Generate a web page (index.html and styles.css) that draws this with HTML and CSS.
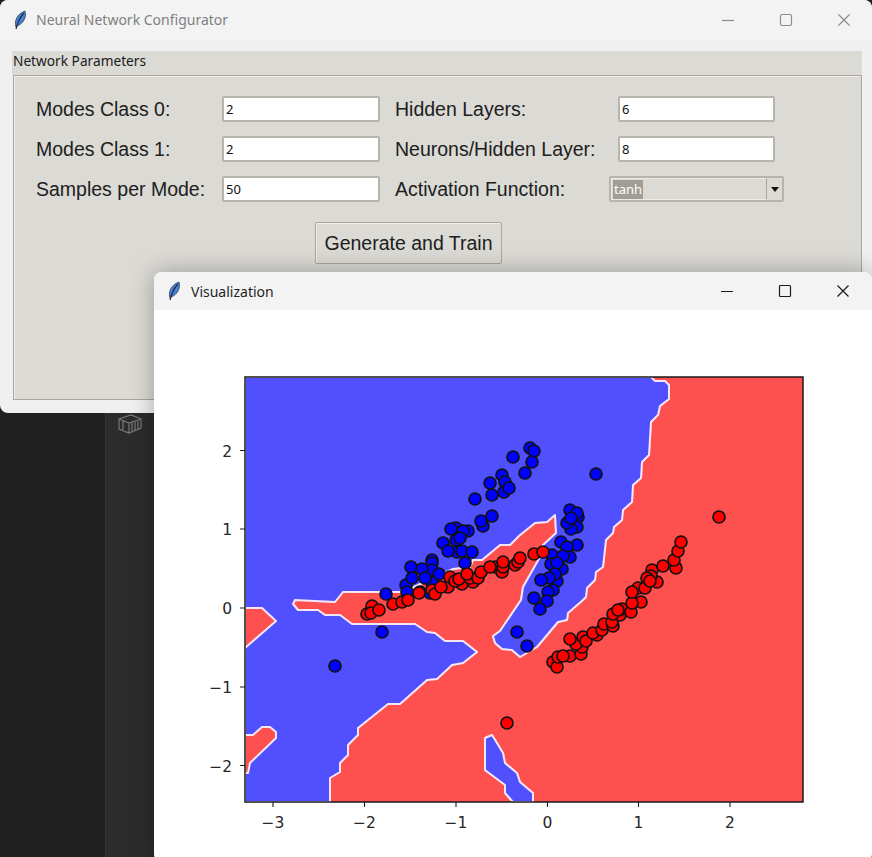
FILE: index.html
```html
<!DOCTYPE html>
<html>

<head>
    <meta charset="UTF-8">
    <title>Neural Network Configurator</title>
    <link rel="stylesheet" href="styles.css">
</head>

<body>
    <div class="desktop">
        <!-- editor behind the two windows -->
        <div class="sidebar">
            <svg class="box-icon" width="26" height="22" viewBox="0 0 26 22">
                <path d="M2 6 L14 2 L24 6 L24 15 L12 20 L2 16 Z M2 6 L12 10 L24 6 M12 10 L12 20 M6 8 L6 18 M15 10 L15 18 M18 9 L18 17 M21 8 L21 16" />
            </svg>
        </div>

        <div class="window config-window">
            <div class="titlebar inactive">
                <svg class="feather" width="14" height="20" viewBox="0 0 14 20">
                    <path d="M3 17 C1 11 4 4 12 1 C14 7 10 14 4 16 Z" fill="#4a82d6" stroke="#1c2c48" stroke-width="0.7" />
                    <path d="M11 3 C8 6 5 11 3 19" stroke="#1c2c48" stroke-width="1.2" fill="none" />
                </svg>
                <span class="title">Neural Network Configurator</span>
                <div class="controls">
                    <svg width="14" height="14" viewBox="0 0 14 14"><path d="M1 7.5 H13" /></svg>
                    <svg width="14" height="14" viewBox="0 0 14 14"><rect x="1.5" y="1.5" width="11" height="11" rx="1.5" /></svg>
                    <svg width="14" height="14" viewBox="0 0 14 14"><path d="M1.5 1.5 L12.5 12.5 M12.5 1.5 L1.5 12.5" /></svg>
                </div>
            </div>
            <div class="window-body">
                <div class="frame-caption">Network Parameters</div>
                <div class="frame">
                    <div class="form-grid">
                        <label>Modes Class 0:</label>
                        <input type="text" value="2">
                        <label>Hidden Layers:</label>
                        <input class="right-entry" type="text" value="6">

                        <label>Modes Class 1:</label>
                        <input type="text" value="2">
                        <label>Neurons/Hidden Layer:</label>
                        <input class="right-entry" type="text" value="8">

                        <label>Samples per Mode:</label>
                        <input type="text" value="50">
                        <label>Activation Function:</label>
                        <div class="combobox">
                            <div class="combo-field"><span class="combo-value">tanh</span></div>
                            <div class="combo-arrow"></div>
                        </div>
                    </div>
                    <button type="button" class="train-button">Generate and Train</button>
                </div>
            </div>
        </div>

        <div class="window plot-window">
            <div class="titlebar">
                <svg class="feather" width="14" height="20" viewBox="0 0 14 20">
                    <path d="M3 17 C1 11 4 4 12 1 C14 7 10 14 4 16 Z" fill="#4a82d6" stroke="#1c2c48" stroke-width="0.7" />
                    <path d="M11 3 C8 6 5 11 3 19" stroke="#1c2c48" stroke-width="1.2" fill="none" />
                </svg>
                <span class="title">Visualization</span>
                <div class="controls">
                    <svg width="14" height="14" viewBox="0 0 14 14"><path d="M1 7.5 H13" /></svg>
                    <svg width="14" height="14" viewBox="0 0 14 14"><rect x="1.5" y="1.5" width="11" height="11" rx="1" /></svg>
                    <svg width="14" height="14" viewBox="0 0 14 14"><path d="M1.5 1.5 L12.5 12.5 M12.5 1.5 L1.5 12.5" /></svg>
                </div>
            </div>

            <!-- viewBox uses screen coordinates so the points are easy to read off -->
            <svg class="plot" width="718" height="547" viewBox="154 310 718 547">
                <defs>
                    <clipPath id="axes-clip"><rect x="245" y="377" width="558" height="425" /></clipPath>
                    <g id="regions">
                        <polygon class="blue-region" points="245,377 651,377 655,381 665,381 669,385 669,399 660,406 658,415 651,422 649,455 642,462 641,478 633,485 632,502 623,510 622,520 614,527 613,533 606,540 603,567 596,572 595,580 587,588 586,597 583,600 568,613 567,620 558,622 537,647 520,657 512,650 502,649 495,643 493,636 500,631 521,600 523,587 540,557 543,545 556,533 555,515 547,522 535,523 520,535 510,545 500,545 482,560 473,560 470,567 453,569 403,592 343,592 335,602 295,600 293,604 298,610 318,610 325,615 340,615 352,624 415,624 427,632 435,633 445,641 463,641 477,652 463,663 452,665 437,679 427,680 400,704 388,704 358,728 358,735 348,745 348,755 340,763 340,772 330,778 330,802 245,802" />
                        <polygon class="blue-region" points="485,738 492,735 497,743 503,753 505,763 517,773 520,782 533,793 533,802 513,802 505,793 505,785 485,770" />
                        <polygon class="red-region" points="245,608 262,608 276,621 245,648" />
                        <polygon class="red-region" points="245,735 253,735 262,727 270,727 276,732 276,738 250,763 248,773 245,773" />
                    </g>
                </defs>

                <rect x="245" y="377" width="558" height="425" fill="#ff5050" />
                <g class="soft" clip-path="url(#axes-clip)">
                    <use href="#regions" class="edge-glow" />
                    <use href="#regions" />
                </g>

                <g class="dots-blue soft">
                    <circle cx="530" cy="448" /><circle cx="534" cy="451" /><circle cx="532" cy="462" /><circle cx="513" cy="457" />
                    <circle cx="525" cy="473" /><circle cx="596" cy="474" /><circle cx="502" cy="475" /><circle cx="505" cy="482" />
                    <circle cx="504" cy="492" /><circle cx="509" cy="488" /><circle cx="490" cy="483" /><circle cx="492" cy="495" />
                    <circle cx="475" cy="499" /><circle cx="483" cy="526" /><circle cx="481" cy="521" /><circle cx="492" cy="516" />
                    <circle cx="468" cy="531" /><circle cx="456" cy="528" /><circle cx="451" cy="529" /><circle cx="463" cy="531" />
                    <circle cx="456" cy="540" /><circle cx="460" cy="538" /><circle cx="443" cy="543" /><circle cx="457" cy="552" />
                    <circle cx="448" cy="551" /><circle cx="462" cy="551" /><circle cx="472" cy="552" /><circle cx="465" cy="563" />
                    <circle cx="432" cy="560" /><circle cx="432" cy="563" /><circle cx="432" cy="570" /><circle cx="411" cy="567" />
                    <circle cx="422" cy="569" /><circle cx="439" cy="574" /><circle cx="432" cy="583" /><circle cx="425" cy="578" />
                    <circle cx="406" cy="585" /><circle cx="412" cy="578" /><circle cx="407" cy="592" /><circle cx="386" cy="594" />
                    <circle cx="420" cy="592" /><circle cx="430" cy="593" />
                    <circle cx="570" cy="510" /><circle cx="578" cy="517" /><circle cx="577" cy="513" /><circle cx="577" cy="527" />
                    <circle cx="571" cy="529" /><circle cx="567" cy="523" /><circle cx="571" cy="518" />
                    <circle cx="577" cy="545" /><circle cx="561" cy="542" /><circle cx="567" cy="547" /><circle cx="570" cy="557" />
                    <circle cx="552" cy="555" /><circle cx="563" cy="556" /><circle cx="551" cy="564" /><circle cx="562" cy="569" />
                    <circle cx="557" cy="563" /><circle cx="557" cy="581" /><circle cx="555" cy="574" /><circle cx="549" cy="578" />
                    <circle cx="541" cy="580" /><circle cx="553" cy="590" /><circle cx="548" cy="592" /><circle cx="547" cy="601" />
                    <circle cx="534" cy="598" /><circle cx="540" cy="609" /><circle cx="527" cy="646" /><circle cx="517" cy="632" />
                    <circle cx="382" cy="632" /><circle cx="335" cy="666" />
                </g>

                <g class="dots-red soft">
                    <circle cx="367" cy="614" /><circle cx="372" cy="606" /><circle cx="371" cy="613" /><circle cx="379" cy="610" />
                    <circle cx="393" cy="604" /><circle cx="402" cy="602" /><circle cx="408" cy="600" /><circle cx="419" cy="593" />
                    <circle cx="432" cy="590" /><circle cx="435" cy="594" /><circle cx="448" cy="587" /><circle cx="441" cy="587" />
                    <circle cx="450" cy="577" /><circle cx="462" cy="584" /><circle cx="455" cy="581" /><circle cx="459" cy="579" />
                    <circle cx="473" cy="582" /><circle cx="470" cy="578" /><circle cx="467" cy="574" /><circle cx="478" cy="578" />
                    <circle cx="481" cy="572" /><circle cx="495" cy="567" /><circle cx="490" cy="567" /><circle cx="502" cy="572" />
                    <circle cx="503" cy="567" /><circle cx="503" cy="562" /><circle cx="515" cy="565" /><circle cx="518" cy="562" />
                    <circle cx="520" cy="558" /><circle cx="534" cy="554" /><circle cx="543" cy="552" /><circle cx="507" cy="723" />
                    <circle cx="553" cy="662" /><circle cx="557" cy="667" /><circle cx="558" cy="657" /><circle cx="570" cy="656" />
                    <circle cx="563" cy="656" /><circle cx="581" cy="654" /><circle cx="582" cy="647" /><circle cx="576" cy="644" />
                    <circle cx="570" cy="639" /><circle cx="583" cy="637" /><circle cx="586" cy="641" /><circle cx="597" cy="635" />
                    <circle cx="593" cy="633" /><circle cx="602" cy="630" /><circle cx="604" cy="624" /><circle cx="613" cy="626" />
                    <circle cx="612" cy="622" /><circle cx="620" cy="615" /><circle cx="613" cy="614" /><circle cx="622" cy="609" />
                    <circle cx="618" cy="610" /><circle cx="631" cy="612" /><circle cx="641" cy="602" /><circle cx="632" cy="603" />
                    <circle cx="638" cy="588" /><circle cx="632" cy="592" /><circle cx="645" cy="588" /><circle cx="657" cy="582" />
                    <circle cx="652" cy="570" /><circle cx="651" cy="576" /><circle cx="647" cy="578" /><circle cx="650" cy="581" />
                    <circle cx="663" cy="566" /><circle cx="676" cy="568" /><circle cx="674" cy="560" /><circle cx="678" cy="551" />
                    <circle cx="681" cy="542" /><circle cx="719" cy="517" />
                </g>

                <rect class="axes-box" x="245" y="377" width="558" height="425" />

                <path class="ticks" d="M273 802 V807 M364.5 802 V807 M456 802 V807 M547.5 802 V807 M638.5 802 V807 M730 802 V807 M245 450.5 H240 M245 529 H240 M245 608 H240 M245 687 H240 M245 765.5 H240" />

                <g class="tick-x">
                    <text x="273" y="828">−3</text>
                    <text x="364.5" y="828">−2</text>
                    <text x="456" y="828">−1</text>
                    <text x="547.5" y="828">0</text>
                    <text x="638.5" y="828">1</text>
                    <text x="730" y="828">2</text>
                </g>
                <g class="tick-y">
                    <text x="232" y="456.5">2</text>
                    <text x="232" y="535">1</text>
                    <text x="232" y="614">0</text>
                    <text x="232" y="693">−1</text>
                    <text x="232" y="771.5">−2</text>
                </g>
            </svg>
        </div>
    </div>
</body>

</html>
```

FILE: styles.css
```css
html, body {
    margin: 0;
    padding: 0;
    background-color: #202020;
}

.desktop {
    position: relative;
    width: 872px;
    height: 857px;
    overflow: hidden;
}

.sidebar {
    position: absolute;
    left: 105px;
    top: 400px;
    width: 100px;
    height: 457px;
    background-color: #2c2c2c;
    border-left: 1px solid #333333;
}

.box-icon {
    position: absolute;
    left: 11px;
    top: 13px;
}

.box-icon path {
    fill: none;
    stroke: #777777;
    stroke-width: 1.2;
}

.window {
    position: absolute;
    border-radius: 8px;
    overflow: hidden;
}

.config-window {
    left: 0;
    top: 0;
    width: 872px;
    height: 413px;
    background-color: #f0f0f0;
}

.plot-window {
    left: 154px;
    top: 272px;
    width: 718px;
    height: 590px;
    background-color: #ffffff;
    box-shadow: 0 0 24px rgba(0, 0, 0, 0.3);
}

.titlebar {
    display: flex;
    align-items: center;
    height: 38px;
    background-color: #f3f3f3;
    color: #1f1f1f;
    font-family: "Noto Sans", sans-serif;
    font-size: 14px;
}

.config-window .titlebar {
    height: 39px;
}

.titlebar .feather {
    margin-left: 13px;
    flex-shrink: 0;
}

.title {
    margin-left: 10px;
}

.config-window .title {
    margin-left: 9px;
}

.titlebar.inactive {
    color: #808080;
}

.controls {
    display: flex;
    gap: 44px;
    margin-left: auto;
    margin-right: 22px;
}

.config-window .controls {
    margin-right: 21px;
}

.controls path,
.controls rect {
    fill: none;
    stroke: #1a1a1a;
    stroke-width: 1.2;
}

.inactive .controls path,
.inactive .controls rect {
    stroke: #8c8c8c;
}

.window-body {
    padding: 12px 10px 0 12px;
}

.frame-caption {
    height: 24px;
    line-height: 19px;
    padding-left: 1px;
    background-color: #dbdad5;
    color: #1a1a1a;
    font-family: "Noto Sans", sans-serif;
    font-size: 13.7px;
}

.frame {
    box-sizing: border-box;
    height: 325px;
    margin-left: 1px;
    padding: 20px 0 0 22px;
    background-color: #dbdad5;
    border: 1px solid #a8a69e;
    box-shadow: inset 1px 1px 0 #efeee9;
}

.form-grid {
    display: grid;
    grid-template-columns: 186px 158px 229px 175px;
    grid-template-rows: 26px 26px 26px;
    row-gap: 14px;
    align-items: center;
}

.form-grid label {
    color: #202020;
    font-family: "Liberation Sans", sans-serif;
    font-size: 19.5px;
    white-space: nowrap;
}

.form-grid label:nth-child(3),
.form-grid label:nth-child(7),
.form-grid label:nth-child(11) {
    margin-left: 15px;
}

input {
    box-sizing: border-box;
    width: 158px;
    height: 26px;
    margin: 0;
    padding: 0 0 0 2px;
    background-color: #ffffff;
    border: 2px solid #b7b4ac;
    border-radius: 2px;
    color: #111111;
    font-family: "Noto Sans", sans-serif;
    font-size: 13px;
    outline: none;
}

.right-entry {
    width: 157px;
    margin-left: 9px;
}

.combobox {
    box-sizing: border-box;
    display: flex;
    width: 175px;
    height: 26px;
    border: 2px solid #b7b4ac;
    border-radius: 2px;
}

.combo-field {
    flex: 1;
    padding: 1px 0 0 1px;
    border: 1px solid #ecebe6;
    border-right-color: #a8a69e;
    font-family: "Noto Sans", sans-serif;
    font-size: 13px;
    line-height: 19px;
}

.combo-value {
    display: inline-block;
    height: 19px;
    padding: 0 1px;
    background-color: #a19d94;
    color: #ffffff;
}

.combo-arrow {
    display: flex;
    align-items: center;
    justify-content: center;
    width: 15px;
}

.combo-arrow::after {
    content: "";
    border-left: 4.5px solid transparent;
    border-right: 4.5px solid transparent;
    border-top: 5px solid #111111;
}

.train-button {
    display: block;
    box-sizing: border-box;
    width: 187px;
    height: 42px;
    margin: 20px 0 0 279px;
    padding: 0;
    background-color: #dbdad5;
    border: 1px solid #a8a69e;
    border-radius: 2px;
    box-shadow: inset 1px 1px 0 #efeee9;
    color: #202020;
    font-family: "Liberation Sans", sans-serif;
    font-size: 19.5px;
}

.plot {
    display: block;
}

.soft {
    filter: blur(0.4px);
}

.blue-region {
    fill: #5050ff;
    stroke: #f4e6f4;
    stroke-width: 2;
    stroke-linejoin: round;
}

.red-region {
    fill: #ff5050;
    stroke: #f4e6f4;
    stroke-width: 2;
    stroke-linejoin: round;
}

.edge-glow {
    opacity: 0.4;
}

.dots-blue circle,
.dots-red circle {
    r: 6px;
    stroke: #111111;
    stroke-width: 1.7;
}

.dots-blue circle {
    fill: #0000ff;
}

.dots-red circle {
    fill: #ff0000;
}

.axes-box {
    fill: none;
    stroke: #1a1a1a;
    stroke-width: 1.5;
}

.ticks {
    fill: none;
    stroke: #1a1a1a;
    stroke-width: 1.1;
}

.tick-x text,
.tick-y text {
    fill: #262626;
    font-family: "DejaVu Sans", sans-serif;
    font-size: 15.5px;
}

.tick-x text {
    text-anchor: middle;
}

.tick-y text {
    text-anchor: end;
}
```
